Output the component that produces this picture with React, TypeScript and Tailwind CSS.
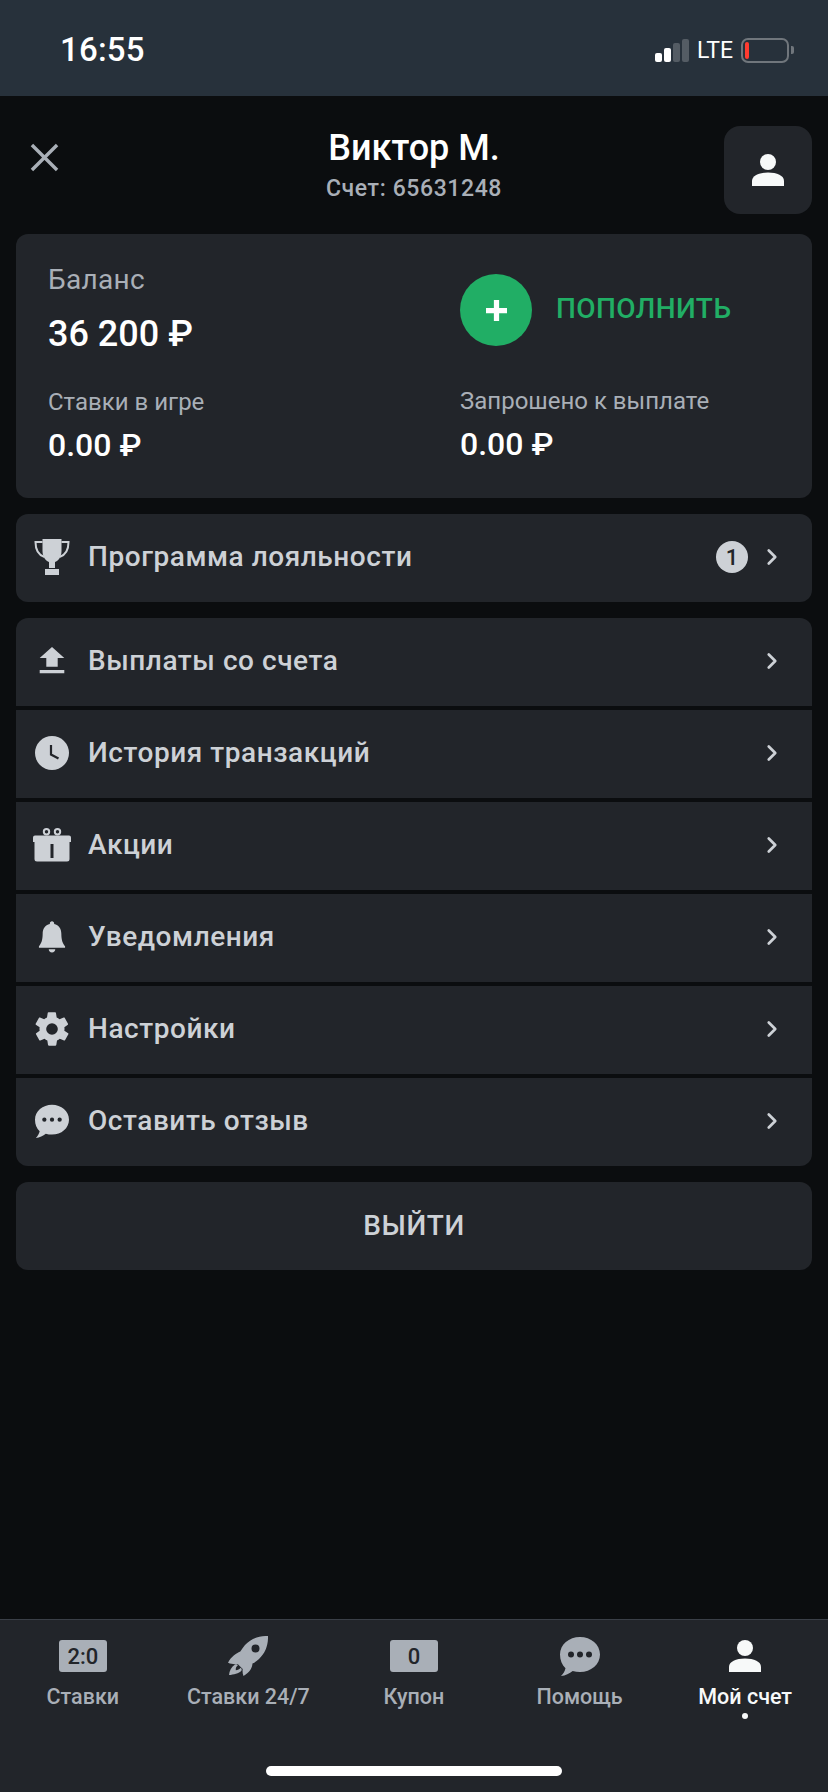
import { ChevronRight } from 'lucide-react';
import type { ReactNode } from 'react';

const Upload = () => (
  <svg viewBox="0 0 24 24" className="w-[36px] h-[36px] fill-[#cdd1d6]">
    <path d="M8.200 15.800h7.600V10h4.400L12 2.600 3.800 10h4.400zM3.800 18h16.400v2.200H3.800z" />
  </svg>
);

const Clock = () => (
  <svg viewBox="0 0 34 34" className="w-[34px] h-[34px]">
    <circle cx="17" cy="17" r="17" fill="#cdd1d6" />
    <path d="M16 9v9.500l7.500 4" fill="none" stroke="#22252a" strokeWidth="2.200" />
  </svg>
);

const Gift = () => (
  <svg viewBox="0 0 38 34" className="w-[38px] h-[34px] fill-[#cdd1d6]">
    <path d="M0 9.500a2 2 0 0 1 2-2h34a2 2 0 0 1 2 2V14H0zM1.500 14h35v17a2.500 2.500 0 0 1-2.500 2.500H4a2.500 2.500 0 0 1-2.500-2.500z" />
    <rect x="17.500" y="16" width="3" height="14" fill="#22252a" />
    <circle cx="13.500" cy="3.700" r="2.700" fill="none" stroke="#cdd1d6" strokeWidth="2" />
    <circle cx="24.500" cy="3.700" r="2.700" fill="none" stroke="#cdd1d6" strokeWidth="2" />
  </svg>
);

const Bell = () => (
  <svg viewBox="0 0 30 34" className="w-[28px] h-[34px] fill-[#cdd1d6]">
    <path d="M15 0c1.400 0 2.300 1 2.300 2.400v.8C22.500 4.400 25 8.500 25 13.500c0 7 1.500 10.500 4 13.500v1.400H1V27c2.500-3 4-6.500 4-13.500 0-5 2.500-9.100 7.700-10.300v-.8C12.700 1 13.600 0 15 0zM11.500 30h7c0 1.900-1.500 3.500-3.500 3.500s-3.500-1.600-3.500-3.500z" />
  </svg>
);

const Gear = () => (
  <svg viewBox="0 0 24 24" className="w-[40px] h-[40px] fill-[#cdd1d6]">
    <path d="M19.400 13c.1-.3.100-.7.100-1s0-.7-.1-1l2.100-1.600c.2-.2.200-.4.100-.6l-2-3.500c-.1-.2-.4-.3-.6-.2l-2.500 1c-.5-.4-1.100-.7-1.700-1l-.4-2.600c0-.3-.2-.5-.5-.5h-4c-.3 0-.5.200-.5.500l-.4 2.600c-.6.300-1.200.6-1.700 1l-2.500-1c-.2-.1-.5 0-.6.200l-2 3.500c-.1.200-.1.400.1.600L4.600 11c-.1.300-.1.700-.1 1s0 .7.100 1l-2.100 1.600c-.2.200-.2.400-.1.600l2 3.500c.1.200.4.300.6.200l2.500-1c.5.400 1.100.7 1.700 1l.4 2.600c0 .3.200.5.500.5h4c.3 0 .5-.2.500-.5l.4-2.600c.6-.3 1.200-.6 1.700-1l2.500 1c.2.100.5 0 .6-.2l2-3.500c.1-.2.100-.4-.1-.6zM12 15.500a3.500 3.500 0 1 1 0-7 3.500 3.500 0 0 1 0 7z" />
  </svg>
);

const Chat = ({ className, dot, r }: { className: string; dot: string; r: number }) => (
  <svg viewBox="0 0 40 40" className={className}>
    <path d="M20 1c11 0 20 7.600 20 17.500S31 36 20 36c-2.600 0-5-.4-7.300-1.100C9.500 37.500 5.500 39.500 1 40c2.300-2.200 3.800-4.800 4.500-7.800C2 29 0 24 0 18.500 0 8.600 9 1 20 1z" />
    <circle cx="11" cy="18.500" r={r} fill={dot} />
    <circle cx="20" cy="18.500" r={r} fill={dot} />
    <circle cx="29" cy="18.500" r={r} fill={dot} />
  </svg>
);

const Trophy = () => (
  <svg viewBox="0 0 36 36" className="w-[36px] h-[36px]">
    <path d="M8.500 0h19v12c0 6-3.500 10-6.500 11v6h-6v-6c-3-1-6.500-5-6.500-11z" fill="#cdd1d6" />
    <path d="M8.500 3H1.500c0 8 2.500 13 9 15M27.500 3h7c0 8-2.500 13-9 15" fill="none" stroke="#cdd1d6" strokeWidth="2" />
    <path d="M11 30h14v6H11z" fill="#cdd1d6" />
  </svg>
);

const Person = ({ className }: { className: string }) => (
  <svg viewBox="0 0 32 32" className={className}>
    <ellipse cx="16" cy="8" rx="8" ry="8" />
    <path d="M0 32v-5c0-5.500 7-8.500 16-8.500s16 3 16 8.500v5z" />
  </svg>
);

const Rocket = () => (
  <svg viewBox="0 0 40 40" className="w-[40px] h-[40px] fill-[#a9afb7]">
    <path d="M40 0c.300 9-2.500 17-9 23-2 1.800-4.200 3.300-6.500 4.600-.3 4.200-2.500 9-9 12.400-.9-1.900-1.100-4.500-.8-7l-5-5c-3.400.5-6 .2-9.700-1.200C3.300 20.300 8 17.800 12.300 15.600 13.800 13.200 15.200 11 17 9 23 2.500 31-.3 40 0zM27.500 8.500a4 4 0 1 0 0 8 4 4 0 0 0 0-8z" />
    <path d="M7 28.500c1.200-.5 2.200-.3 3 .5-1.700 1.500-2.500 3-2.200 5.300 2-.2 3.600-1 5-2.600.9.800 1.200 1.800.6 3C11 37.200 5.500 38.700 1 39c.3-4.200 2.500-8 6-10.500z" />
  </svg>
);

type MenuRow = { label: string; icon: ReactNode };

const rows: MenuRow[] = [
  { label: 'Выплаты со счета', icon: <Upload /> },
  { label: 'История транзакций', icon: <Clock /> },
  { label: 'Акции', icon: <Gift /> },
  { label: 'Уведомления', icon: <Bell /> },
  { label: 'Настройки', icon: <Gear /> },
  { label: 'Оставить отзыв', icon: <Chat className="w-[34px] h-[34px] fill-[#cdd1d6]" dot="#22252a" r={2.500} /> },
];

function Row({ label, icon, badge, className }: MenuRow & { badge?: boolean; className: string }) {
  return (
    <div className={`h-[88px] bg-[#22252a] flex items-center pb-[2px] ${className}`}>
      <div className="w-[72px] flex justify-center shrink-0">{icon}</div>
      <span className="text-[28px] leading-none font-medium text-[#cdd1d6] tracking-[0.55px]">{label}</span>
      {badge && (
        <span className="ml-auto w-[32px] h-[32px] rounded-full bg-[#cdd1d6] text-[#22252a] text-[22px] font-medium flex items-center justify-center">
          1
        </span>
      )}
      <ChevronRight className={`w-[26px] h-[26px] text-[#cdd1d6] mr-[27px] ${badge ? 'ml-[11px]' : 'ml-auto'}`} strokeWidth={2.5} />
    </div>
  );
}

function Tab({ label, icon, active }: { label: string; icon: ReactNode; active?: boolean }) {
  return (
    <div className="flex-1 flex flex-col items-center">
      <div className="h-[40px] flex items-center justify-center">{icon}</div>
      <span className={`mt-[7px] text-[21.5px] leading-[28px] font-medium whitespace-nowrap ${active ? 'text-[#f7f9f9]' : 'text-[#a9afb7]'}`}>
        {label}
      </span>
      {active && <span className="w-[6px] h-[6px] rounded-full bg-[#f7f9f9] mt-[2px]" />}
    </div>
  );
}

const Score = ({ text }: { text: string }) => (
  <span className="w-[48px] h-[32px] rounded-[3px] bg-[#a9afb7] text-[#22252a] text-[22px] font-medium flex items-center justify-center">
    {text}
  </span>
);

export default function App() {
  return (
    <div className="w-[828px] h-[1792px] bg-[#0b0d0f] flex flex-col font-['Roboto',sans-serif]">
      <div className="h-[96px] bg-[#27313b] flex items-center justify-between shrink-0 pl-[60px] pr-[34px] pt-[4px]">
        <span className="text-[33px] font-medium text-white tracking-[0.2px]">16:55</span>
        <div className="flex items-center">
          <div className="flex items-end gap-[2px] h-[24px]">
            <span className="w-[7px] h-[9px] rounded-[2px] bg-white" />
            <span className="w-[7px] h-[14px] rounded-[2px] bg-white" />
            <span className="w-[7px] h-[19px] rounded-[2px] bg-[#545c64]" />
            <span className="w-[7px] h-[23px] rounded-[2px] bg-[#545c64]" />
          </div>
          <span className="ml-[8px] text-[23px] leading-none text-white">LTE</span>
          <div className="ml-[8px] w-[48px] h-[25px] rounded-[7px] border-[2px] border-[#70767c] p-[2px] flex">
            <span className="w-[4px] rounded-[2px] bg-[#ff3b30]" />
          </div>
          <span className="ml-[2px] w-[3px] h-[8px] rounded-r-[2px] bg-[#70767c]" />
        </div>
      </div>

      <div className="h-[138px] shrink-0 flex items-start px-[16px] pt-[30px]">
        <div className="w-[88px] pl-[14px] pt-[17px]">
          <svg viewBox="0 0 30 30" className="w-[29px] h-[29px] stroke-[#a9afb7]" fill="none" strokeWidth="3.500">
            <path d="M2 2l26 26M28 2L2 28" />
          </svg>
        </div>
        <div className="flex-1 flex flex-col items-center">
          <span className="text-[36px] leading-[44px] font-medium text-white">Виктор М.</span>
          <span className="mt-[4px] text-[23px] leading-[30px] font-medium text-[#a9afb7] tracking-[0.6px]">Счет: 65631248</span>
        </div>
        <div className="w-[88px] h-[88px] rounded-[16px] bg-[#22252a] flex items-center justify-center">
          <Person className="w-[32px] h-[32px] fill-[#f7f9f9]" />
        </div>
      </div>

      <div className="px-[16px] flex flex-col">
        <div className="h-[264px] rounded-[12px] bg-[#22252a] pl-[32px] grid grid-cols-[412px_1fr]">
          <div className="pt-[29px]">
            <div className="text-[28px] leading-[34px] text-[#a9afb7] tracking-[0.3px]">Баланс</div>
            <div className="mt-[15px] text-[36px] leading-[44px] font-medium text-white">36 200 ₽</div>
            <div className="mt-[30px] text-[24px] leading-[32px] text-[#a9afb7]">Ставки в игре</div>
            <div className="mt-[8px] text-[32px] leading-[38px] font-medium text-white">0.00 ₽</div>
          </div>
          <div className="pt-[40px]">
            <div className="flex items-center h-[72px]">
              <div className="w-[72px] h-[72px] rounded-full bg-[#21ae65] flex items-center justify-center">
                <svg viewBox="0 0 20 20" className="w-[21px] h-[21px] fill-white">
                  <path d="M7.500 0h5v7.500H20v5h-7.500V20h-5v-7.500H0v-5h7.500z" />
                </svg>
              </div>
              <span className="ml-[24px] mb-[2px] text-[28px] font-medium text-[#21ae65] tracking-[0.4px]">ПОПОЛНИТЬ</span>
            </div>
            <div className="mt-[39px] text-[24px] leading-[32px] text-[#a9afb7]">Запрошено к выплате</div>
            <div className="mt-[8px] text-[32px] leading-[38px] font-medium text-white">0.00 ₽</div>
          </div>
        </div>

        <Row label="Программа лояльности" icon={<Trophy />} badge className="mt-[16px] rounded-[12px]" />

        <div className="mt-[16px] flex flex-col gap-[4px]">
          {rows.map((r, i) => (
            <Row
              key={r.label}
              {...r}
              className={i === 0 ? 'rounded-t-[12px]' : i === rows.length - 1 ? 'rounded-b-[12px]' : ''}
            />
          ))}
        </div>

        <div className="mt-[16px] h-[88px] rounded-[12px] bg-[#22252a] flex items-center justify-center text-[28px] font-medium text-[#cdd1d6] tracking-[0.6px]">
          ВЫЙТИ
        </div>
      </div>

      <div className="mt-auto h-[173px] bg-[#22252a] border-t border-[#3a3f47] flex flex-col relative">
        <div className="flex pt-[16px]">
          <Tab label="Ставки" icon={<Score text="2:0" />} />
          <Tab label="Ставки 24/7" icon={<Rocket />} />
          <Tab label="Купон" icon={<Score text="0" />} />
          <Tab label="Помощь" icon={<Chat className="w-[40px] h-[40px] fill-[#a9afb7]" dot="#22252a" r={3} />} />
          <Tab label="Мой счет" icon={<Person className="w-[32px] h-[32px] fill-[#f7f9f9]" />} active />
        </div>
        <span className="absolute left-[266px] bottom-[16px] w-[296px] h-[10px] rounded-full bg-white" />
      </div>
    </div>
  );
}
